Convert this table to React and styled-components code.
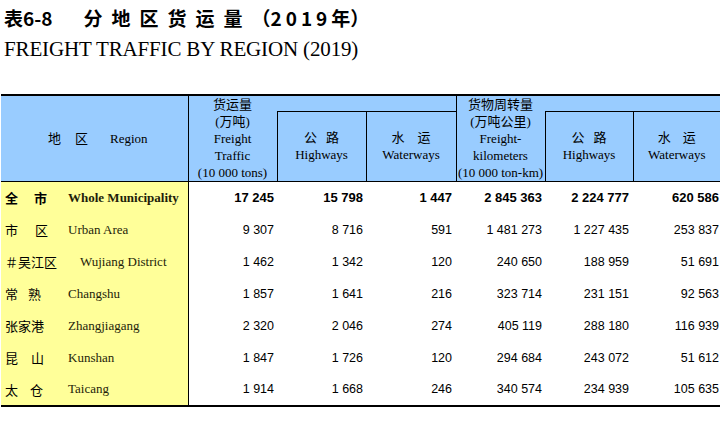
import React from 'react';
import styled, { createGlobalStyle } from 'styled-components';

const GlobalStyle = createGlobalStyle`
  html, body {
    margin: 0;
    padding: 0;
    background: #fff;
  }
  body {
    font-family: "Liberation Serif", "Noto Sans CJK SC", serif;
    color: #000;
  }
`;

const Page = styled.div`
  width: 723px;
  height: 438px;
  overflow: hidden;
`;

const TitleCn = styled.div`
  margin: 6px 0 0 4px;
  height: 24px;
  line-height: 24px;
  font-family: "Noto Sans CJK SC", sans-serif;
  font-weight: 700;
  font-size: 19px;
  white-space: nowrap;
`;

const Spaced = styled.span`
  letter-spacing: ${p => p.$gap}px;
  margin-left: ${p => p.$ml || 0}px;
`;

const TitleEn = styled.div`
  margin: 5px 0 0 4px;
  height: 28px;
  line-height: 28px;
  font-family: "Liberation Serif", serif;
  font-size: 21px;
  letter-spacing: -0.15px;
  white-space: nowrap;
`;

const Table = styled.table`
  margin: 31px 0 0 1px;
  width: 719px;
  table-layout: fixed;
  border-collapse: collapse;
  border-top: 2px solid #000;
  border-bottom: 2px solid #000;
`;

const Th = styled.th`
  background: #99ccff;
  padding: 0;
  font-weight: normal;
  font-size: 13px;
  line-height: 17px;
  text-align: ${p => p.$align || 'center'};
  padding-left: ${p => p.$pl || 0}px;
  vertical-align: ${p => p.$top ? 'top' : 'middle'};
  border-left: ${p => p.$l ? '1px solid #000' : 'none'};
  border-bottom: 1px solid #000;
  white-space: nowrap;
`;

const HeadRow = styled.tr`
  height: ${p => p.$h}px;
`;

const BodyRow = styled.tr`
  height: 32px;
`;

const RegionCell = styled.td`
  background: #ffff99;
  border-right: 1px solid #000;
  padding: 0 0 0 4px;
  vertical-align: middle;
`;

const RegionLine = styled.div`
  display: grid;
  grid-template-columns: 63px auto;
  align-items: center;
  font-size: 13px;
  font-weight: ${p => p.$bold ? 700 : 400};
  white-space: nowrap;
`;

const NameCn = styled.span`
  font-family: "Noto Sans CJK SC", sans-serif;
  letter-spacing: ${p => p.$gap}px;
`;

const NameEn = styled.span`
  font-family: "Liberation Serif", serif;
  color: #1e1e0a;
  padding-left: ${p => p.$indent || 0}px;
`;

const Num = styled.td`
  padding: 0 ${p => p.$pr}px 0 0;
  text-align: right;
  vertical-align: middle;
  font-family: "Liberation Sans", Arial, sans-serif;
  font-size: ${p => p.$bold ? 13 : 12.5}px;
  font-weight: ${p => p.$bold ? 700 : 400};
  color: #000;
  white-space: nowrap;
`;

const rows = [
  { cn: '全市', gap: 16, en: 'Whole Municipality', bold: true, v: ['17 245', '15 798', '1 447', '2 845 363', '2 224 777', '620 586'] },
  { cn: '市区', gap: 17, en: 'Urban Area', v: ['9 307', '8 716', '591', '1 481 273', '1 227 435', '253 837'] },
  { cn: '＃吴江区', gap: 0, en: 'Wujiang District', indent: 12, v: ['1 462', '1 342', '120', '240 650', '188 959', '51 691'] },
  { cn: '常熟', gap: 10, en: 'Changshu', v: ['1 857', '1 641', '216', '323 714', '231 151', '92 563'] },
  { cn: '张家港', gap: 0, en: 'Zhangjiagang', v: ['2 320', '2 046', '274', '405 119', '288 180', '116 939'] },
  { cn: '昆山', gap: 13, en: 'Kunshan', v: ['1 847', '1 726', '120', '294 684', '243 072', '51 612'] },
  { cn: '太仓', gap: 12, en: 'Taicang', v: ['1 914', '1 668', '246', '340 574', '234 939', '105 635'] },
];

const widths = [187, 89, 89, 90, 89, 88, 87];
const rightPad = [3, 3, 4, 3, 4, 1];

const Pair = ({ cn, gap, en }) => (
  <>
    <Spaced $gap={gap} style={{ paddingLeft: gap }}>{cn}</Spaced>
    <br />
    {en}
  </>
);

const App = () => (
  <Page>
    <GlobalStyle />
    <TitleCn>
      表6-8
      <Spaced $gap={9} $ml={31}>分地区货运量</Spaced>
      （<Spaced $gap={4}>2019</Spaced>年）
    </TitleCn>
    <TitleEn>FREIGHT TRAFFIC BY REGION (2019)</TitleEn>

    <Table>
      <colgroup>
        {widths.map((w, i) => <col key={i} style={{ width: w }} />)}
      </colgroup>
      <thead>
        <HeadRow $h={16}>
          <Th rowSpan={2} $align="left" $pl={47}>
            <Spaced $gap={14}>地区</Spaced>
            <Spaced $gap={0} $ml={8}>Region</Spaced>
          </Th>
          <Th rowSpan={2} $top $l>
            货运量<br />(万吨)<br />Freight<br />Traffic<br />(10 000 tons)
          </Th>
          <Th colSpan={2} />
          <Th rowSpan={2} $top $l>
            货物周转量<br />(万吨公里)<br />Freight-<br />kilometers<br />(10 000 ton-km)
          </Th>
          <Th colSpan={2} />
        </HeadRow>
        <HeadRow $h={68}>
          <Th $l><Pair cn="公路" gap={9} en="Highways" /></Th>
          <Th $l><Pair cn="水运" gap={13} en="Waterways" /></Th>
          <Th $l><Pair cn="公路" gap={9} en="Highways" /></Th>
          <Th $l><Pair cn="水运" gap={12} en="Waterways" /></Th>
        </HeadRow>
      </thead>
      <tbody>
        {rows.map(r => (
          <BodyRow key={r.en}>
            <RegionCell>
              <RegionLine $bold={r.bold}>
                <NameCn $gap={r.gap}>{r.cn}</NameCn>
                <NameEn $indent={r.indent}>{r.en}</NameEn>
              </RegionLine>
            </RegionCell>
            {r.v.map((n, i) => (
              <Num key={i} $bold={r.bold} $pr={rightPad[i]}>{n}</Num>
            ))}
          </BodyRow>
        ))}
      </tbody>
    </Table>
  </Page>
);

export default App;
